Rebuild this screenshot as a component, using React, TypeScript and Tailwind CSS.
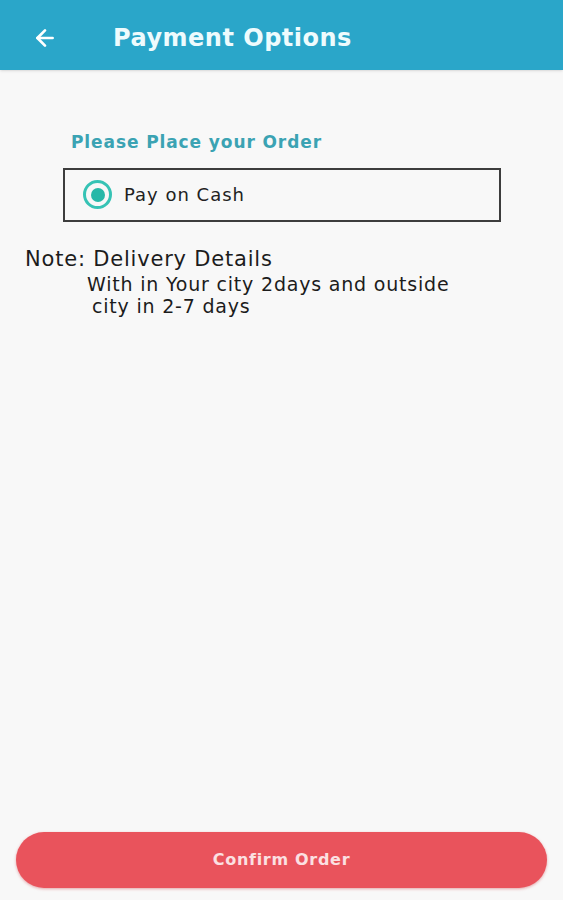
import { ArrowLeft } from 'lucide-react';

export default function App() {
  return (
    <div className="flex h-[900px] w-full flex-col bg-[#f8f8f8] font-['DejaVu_Sans',sans-serif]">
      {/* Header */}
      <header className="flex h-[70px] shrink-0 items-center bg-[#2aa6c9] pt-[6px] shadow-sm">
        <ArrowLeft className="ml-[32px] h-[26px] w-[26px] text-white" strokeWidth={2.5} />
        <h1 className="ml-[55px] text-[24px] font-bold tracking-[0.5px] text-[#eefbfd]">Payment Options</h1>
      </header>

      {/* Content */}
      <main className="flex flex-col">
        <p className="ml-[71px] mt-[60px] text-[17px] font-bold tracking-[0.9px] text-[#3ba3b3]">
          Please Place your Order
        </p>
        <label className="ml-[63px] mt-[12px] flex h-[54px] w-[438px] items-center border-2 border-[#3d3d3d]">
          <span className="ml-[18px] flex h-[29px] w-[29px] items-center justify-center rounded-full border-[3px] border-[#36c3b5]">
            <span className="h-[14px] w-[14px] rounded-full bg-[#27b8a8]" />
          </span>
          <span className="ml-[12px] text-[18px] tracking-[1px] text-[#222]">Pay on Cash</span>
        </label>

        <p className="ml-[25px] mt-[25px] text-[21px] leading-[25px] tracking-[0.8px] text-[#1c1c1c]">
          Note: Delivery Details
        </p>
        <p className="ml-[87px] mt-[1px] text-[19px] leading-[22px] tracking-[0.8px] text-[#1c1c1c]">
          With in Your city 2days and outside
          <br />
          <span className="ml-[5px]">city in 2-7 days</span>
        </p>
      </main>

      {/* Footer button */}
      <button className="mx-[16px] mb-[12px] mt-auto h-[56px] rounded-full bg-[#e9535c] text-[16px] font-bold tracking-[0.7px] text-[#fbe0e2] shadow-[0_1px_3px_rgba(200,40,50,0.4)]">
        Confirm Order
      </button>
    </div>
  );
}
